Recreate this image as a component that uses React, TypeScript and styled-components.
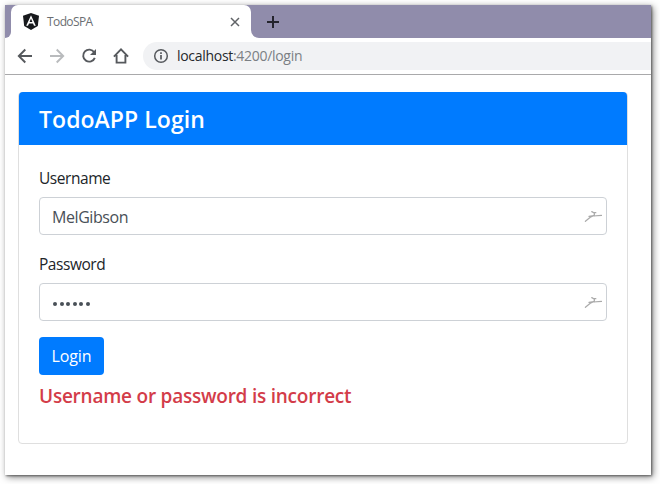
import React from 'react';
import styled, { createGlobalStyle } from 'styled-components';

const GlobalStyle = createGlobalStyle`
  * { box-sizing: border-box; }
  body {
    margin: 0;
    background: #fff;
    color: #212529;
    font-family: "Open Sans", "Noto Sans", sans-serif;
    overflow: hidden;
  }
`;

const Desktop = styled.div`
  width: 660px;
  height: 484px;
  padding: 5px 9px 9px 5px;
`;

const Browser = styled.div`
  height: 470px;
  display: flex;
  flex-direction: column;
  background: #fff;
  box-shadow: 1px 1px 2px rgba(0, 0, 0, 0.45), 2px 2px 7px rgba(0, 0, 0, 0.5);
`;

const TabStrip = styled.div`
  height: 33px;
  flex: none;
  display: flex;
  align-items: stretch;
  background: #908cab;
`;

const StripStart = styled.div`
  width: 6px;
  border-bottom-right-radius: 6px;
  background: #908cab;
`;

const TabBack = styled.div`
  width: 246px;
  margin-left: -6px;
  padding-left: 6px;
  background: linear-gradient(#908cab 0 50%, #fff 50%);
`;

const Tab = styled.div`
  height: 33px;
  display: flex;
  align-items: center;
  padding: 0 10px 0 12px;
  border-radius: 7px 7px 0 0;
  background: #fff;
`;

const StripEnd = styled.div`
  flex: 1;
  display: flex;
  align-items: center;
  padding-left: 16px;
  border-bottom-left-radius: 8px;
  background: #908cab;
`;

const StripEndBack = styled.div`
  flex: 1;
  display: flex;
  background: linear-gradient(to right, #fff 10px, #908cab 10px);
`;

const StartLayer = styled.div`
  width: 6px;
  position: relative;
  z-index: 1;
  display: flex;
  background: #fff;
`;

const TabTitle = styled.span`
  flex: 1;
  margin-left: 8px;
  font-size: 12px;
  line-height: 16px;
  letter-spacing: -0.6px;
  color: #6b6e72;
`;

const Toolbar = styled.div`
  height: 37px;
  flex: none;
  display: flex;
  align-items: center;
  padding: 0 0 1px 12px;
  border-bottom: 1px solid #a9a9ab;
`;

const NavIcons = styled.div`
  width: 126px;
  display: flex;
  gap: 16px;
`;

const AddressBar = styled.div`
  flex: 1;
  height: 28px;
  display: flex;
  align-items: center;
  gap: 8px;
  padding-left: 10px;
  border-radius: 14px 0 0 14px;
  background: #f1f2f4;
`;

const Address = styled.span`
  font-size: 14px;
  line-height: 20px;
  letter-spacing: -0.3px;
  color: #25282c;
`;

const AddressRest = styled.span`
  color: #7b7f84;
`;

const Page = styled.main`
  padding: 17px 23px 0 13px;
`;

const Card = styled.section`
  height: 352px;
  border: 1px solid #dfdfdf;
  border-radius: 4px;
`;

const CardHeader = styled.header`
  height: 53px;
  margin: -1px 0 0;
  padding: 13px 20px 0;
  border-radius: 4px 4px 0 0;
  background: #007bff;
`;

const Title = styled.h4`
  margin: 0;
  font-size: 23px;
  font-weight: 600;
  line-height: 29px;
  letter-spacing: 0.05px;
  color: #fff;
`;

const Form = styled.form`
  padding: 20px;
`;

const Field = styled.div`
  margin-bottom: 16px;
`;

const Label = styled.label`
  display: block;
  height: 24px;
  margin-bottom: 8px;
  padding-top: 1px;
  font-size: 15.5px;
  line-height: 24px;
  letter-spacing: -0.45px;
`;

const InputFrame = styled.div`
  height: 38px;
  display: flex;
  align-items: center;
  padding: 0 4px 0 12px;
  border: 1px solid #cdd1d6;
  border-radius: 4px;
`;

const Input = styled.input`
  flex: 1;
  min-width: 0;
  height: 36px;
  padding: 2px 0 0;
  border: 0;
  outline: 0;
  background: transparent;
  color: #495057;
  font: 16px/24px "Open Sans", "Noto Sans", sans-serif;
  letter-spacing: -0.42px;
`;

const Dots = styled.div`
  flex: 1;
  display: flex;
  gap: 2.5px;
  padding: 3px 0 0 1px;
`;

const Dot = styled.span`
  width: 4px;
  height: 4px;
  border-radius: 50%;
  background: #495057;
`;

const LoginButton = styled.button`
  display: block;
  width: 65px;
  height: 38px;
  padding: 0;
  border: 0;
  border-radius: 4px;
  background: #007bff;
  color: #fff;
  font: 16px/24px "Open Sans", "Noto Sans", sans-serif;
  letter-spacing: -0.15px;
`;

const ErrorText = styled.h5`
  margin: 9px 0 0;
  font-size: 19px;
  font-weight: 600;
  line-height: 24px;
  letter-spacing: -0.23px;
  color: #d33c49;
`;

const BirdIcon = () => (
  <svg width="18" height="12" viewBox="0 0 18 12" fill="none" stroke="#aaa" strokeLinecap="round" strokeLinejoin="round">
    <path d="M1.4 11.3 6.3 7.2 9 6 17.6 5.4M5 6.4 9.7 5.6" strokeWidth="1.2" />
    <path d="M7.8 1.6 9.8 2.7H11.8M10.3 2.8V5.5" strokeWidth="1.3" />
  </svg>
);

const nav = { width: 16, height: 16, viewBox: '0 0 16 16', fill: 'none', stroke: '#56595d', strokeWidth: 1.9 };

export default function App() {
  return (
    <>
      <GlobalStyle />
      <Desktop>
        <Browser>
          <TabStrip>
            <StartLayer><StripStart /></StartLayer>
            <TabBack>
              <Tab>
                <svg width="16" height="17" viewBox="0 0 16 17">
                  <path d="M8 0 16 2.8 14.8 13 8 17 1.2 13 0 2.8Z" fill="#17191c" />
                  <path d="M8 2.2 3.2 12.8H5L6 10.4H10L11 12.8H12.8ZM8 5.6 9.4 8.9H6.6Z" fill="#fff" fillRule="evenodd" />
                </svg>
                <TabTitle>TodoSPA</TabTitle>
                <svg width="12" height="12" viewBox="0 0 12 12" stroke="#606367" strokeWidth="1.5">
                  <path d="m2 2 8 8M10 2 2 10" />
                </svg>
              </Tab>
            </TabBack>
            <StripEndBack>
              <StripEnd>
                <svg width="12" height="12" viewBox="0 0 12 12" stroke="#24242d" strokeWidth="2">
                  <path d="M6 0V12M0 6H12" />
                </svg>
              </StripEnd>
            </StripEndBack>
          </TabStrip>
          <Toolbar>
            <NavIcons>
              <svg {...nav}><path d="M15 8H2M8.3 1.5 1.8 8l6.5 6.5" /></svg>
              <svg {...nav} stroke="#b9bbbd"><path d="M1 8h13M7.7 1.5 14.2 8l-6.5 6.5" /></svg>
              <svg {...nav}>
                <path d="M13.2 4.3A6 6 0 1 0 13.8 9.8" />
                <path d="M15 1V7H9Z" fill="#56595d" stroke="none" />
              </svg>
              <svg {...nav}><path d="M.9 8.6 8 1.4l7.1 7.2M3.6 7V14.6H12.4V7" /></svg>
            </NavIcons>
            <AddressBar>
              <svg width="16" height="16" viewBox="0 0 16 16" fill="none" stroke="#56595d">
                <circle cx="8" cy="8" r="6.3" strokeWidth="1.5" />
                <path d="M8 7v4.5M8 4.3v1.7" strokeWidth="1.7" />
              </svg>
              <Address>localhost<AddressRest>:4200/login</AddressRest></Address>
            </AddressBar>
          </Toolbar>
          <Page>
            <Card>
              <CardHeader><Title>TodoAPP Login</Title></CardHeader>
              <Form onSubmit={(e) => e.preventDefault()}>
                <Field>
                  <Label htmlFor="username">Username</Label>
                  <InputFrame>
                    <Input id="username" defaultValue="MelGibson" />
                    <BirdIcon />
                  </InputFrame>
                </Field>
                <Field>
                  <Label>Password</Label>
                  <InputFrame>
                    <Dots>{[0, 1, 2, 3, 4, 5].map((n) => <Dot key={n} />)}</Dots>
                    <BirdIcon />
                  </InputFrame>
                </Field>
                <LoginButton>Login</LoginButton>
                <ErrorText>Username or password is incorrect</ErrorText>
              </Form>
            </Card>
          </Page>
        </Browser>
      </Desktop>
    </>
  );
}
